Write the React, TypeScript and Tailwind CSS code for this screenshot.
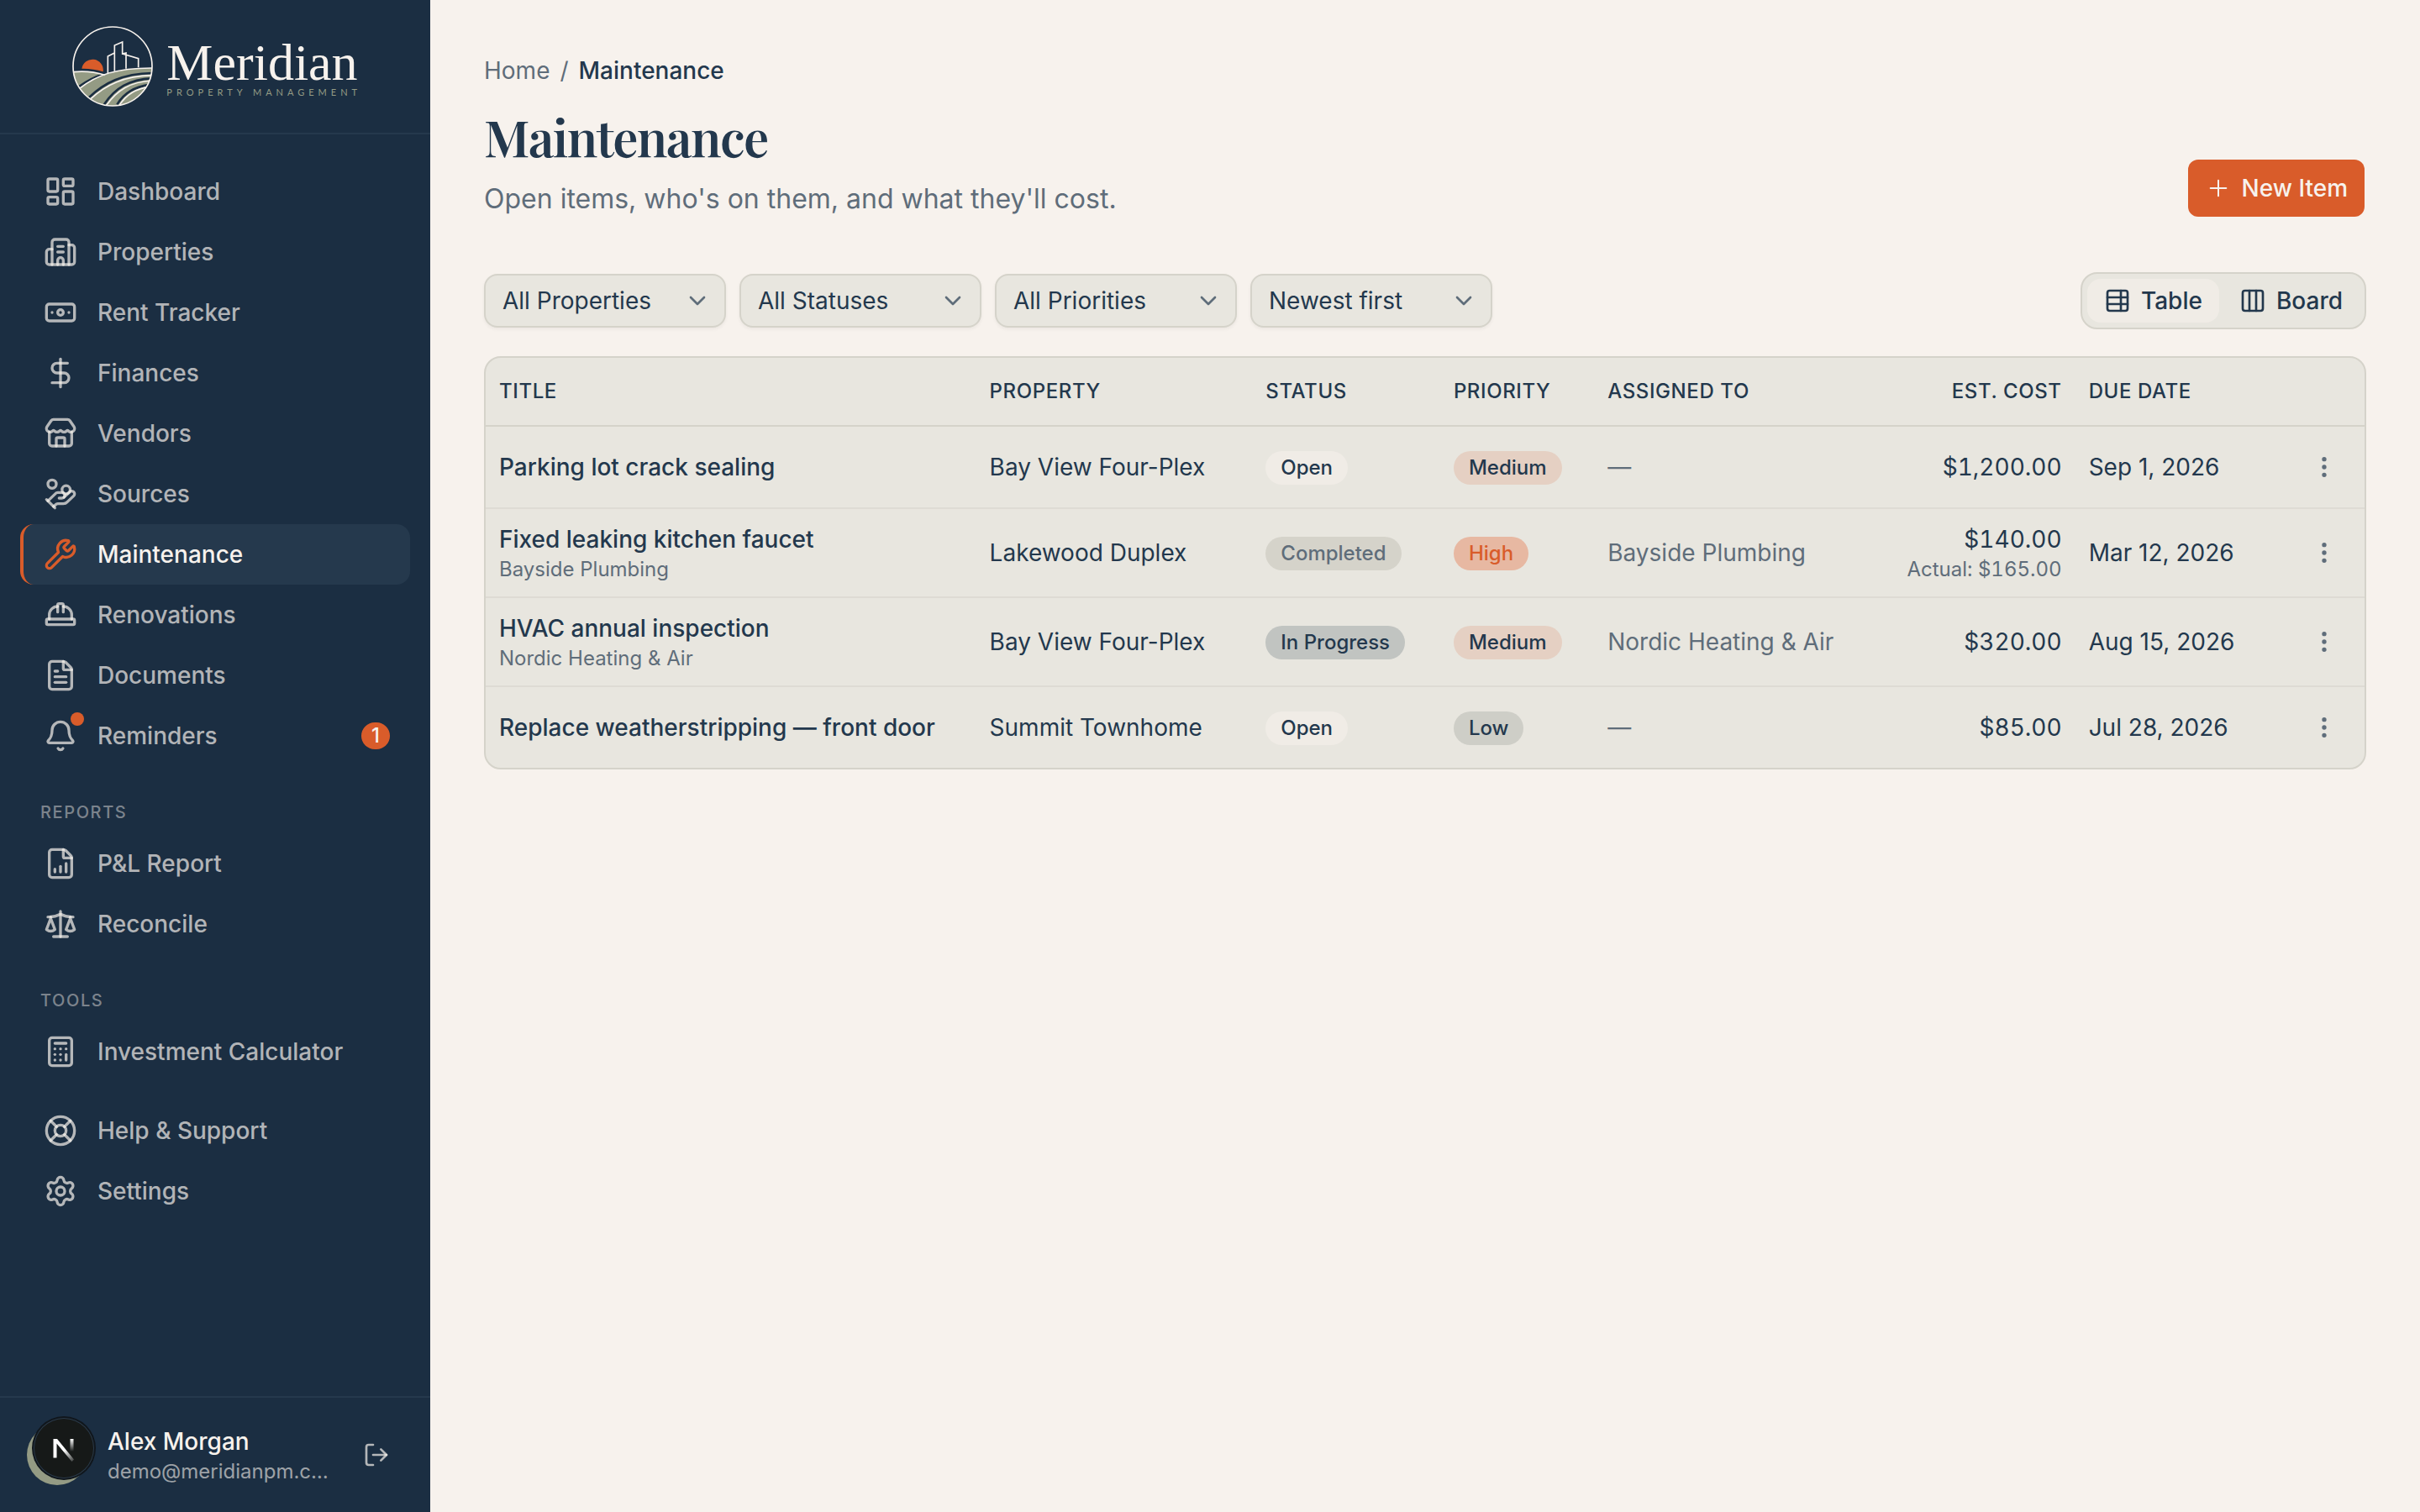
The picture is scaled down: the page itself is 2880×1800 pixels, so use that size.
import { useState, type ReactNode } from 'react';
import {
  Banknote,
  Bell,
  Building2,
  Calculator,
  ChevronDown,
  Columns3,
  DollarSign,
  EllipsisVertical,
  FileChartColumnIncreasing,
  FileText,
  HandCoins,
  HardHat,
  LayoutDashboard,
  LifeBuoy,
  LogOut,
  Plus,
  Scale,
  Settings,
  Store,
  TableProperties,
  Wrench,
  type LucideIcon,
} from 'lucide-react';

type NavEntry = { label: string; icon: LucideIcon; badge?: number };

const mainNav: NavEntry[] = [
  { label: 'Dashboard', icon: LayoutDashboard },
  { label: 'Properties', icon: Building2 },
  { label: 'Rent Tracker', icon: Banknote },
  { label: 'Finances', icon: DollarSign },
  { label: 'Vendors', icon: Store },
  { label: 'Sources', icon: HandCoins },
  { label: 'Maintenance', icon: Wrench },
  { label: 'Renovations', icon: HardHat },
  { label: 'Documents', icon: FileText },
  { label: 'Reminders', icon: Bell, badge: 1 },
];

const reportsNav: NavEntry[] = [
  { label: 'P&L Report', icon: FileChartColumnIncreasing },
  { label: 'Reconcile', icon: Scale },
];

const toolsNav: NavEntry[] = [{ label: 'Investment Calculator', icon: Calculator }];

const supportNav: NavEntry[] = [
  { label: 'Help & Support', icon: LifeBuoy },
  { label: 'Settings', icon: Settings },
];

const filters = [
  { label: 'Property', options: ['All Properties', 'Bay View Four-Plex', 'Lakewood Duplex', 'Summit Townhome'] },
  { label: 'Status', options: ['All Statuses', 'Open', 'In Progress', 'Completed'] },
  { label: 'Priority', options: ['All Priorities', 'High', 'Medium', 'Low'] },
  { label: 'Sort', options: ['Newest first', 'Oldest first'] },
];

const badgeStyles: Record<string, string> = {
  Open: 'bg-[#f0ece6] text-[#23384d]',
  Completed: 'bg-[#d5d3ca] text-[#5f6d7a]',
  'In Progress': 'bg-[#c1c4c1] text-[#23384d]',
  High: 'bg-[#e7b8a2] text-[#d95c2a]',
  Medium: 'bg-[#e5d0c3] text-[#23384d]',
  Low: 'bg-[#cecec7] text-[#23384d]',
};

const items = [
  { title: 'Parking lot crack sealing', property: 'Bay View Four-Plex', status: 'Open', priority: 'Medium', cost: '$1,200.00', due: 'Sep 1, 2026' },
  { title: 'Fixed leaking kitchen faucet', vendor: 'Bayside Plumbing', property: 'Lakewood Duplex', status: 'Completed', priority: 'High', cost: '$140.00', actual: '$165.00', due: 'Mar 12, 2026' },
  { title: 'HVAC annual inspection', vendor: 'Nordic Heating & Air', property: 'Bay View Four-Plex', status: 'In Progress', priority: 'Medium', cost: '$320.00', due: 'Aug 15, 2026' },
  { title: 'Replace weatherstripping — front door', property: 'Summit Townhome', status: 'Open', priority: 'Low', cost: '$85.00', due: 'Jul 28, 2026' },
];

function Logo() {
  return (
    <div className="flex items-center gap-4">
      <svg viewBox="78 65 288 288" className="size-24" fill="none" aria-hidden="true">
        <clipPath id="disc">
          <circle cx="222" cy="209" r="141" />
        </clipPath>
        <path d="M112 217a38 38 0 0 1 76 11q-36-12-76-11Z" fill="#d95c2a" />
        <g stroke="#f7f2ed" strokeWidth="5">
          <path d="M205 234v-61l24-12M229 226v-92l28-12v42l13-3v56M257 164l57 17v32" />
        </g>
        <g clipPath="url(#disc)">
          <path d="M80 229c40-4 80 0 114 11 45-18 100-26 172-25v140H80Z" fill="#949b84" />
          <g stroke="#1b2e42" strokeWidth="8">
            <path d="M100 283c30-22 55-36 92-46" />
            <path d="M138 320c54-52 118-85 226-87" />
            <path d="M192 345c38-58 90-90 172-93" />
            <path d="M238 345c26-42 60-62 120-72" />
          </g>
          <g stroke="#f7f2ed" strokeWidth="5">
            <path d="M80 229c40-4 80 0 114 11" />
            <path d="M104 288c62-48 130-74 262-73" />
            <path d="M144 325c54-50 118-82 222-84" />
            <path d="M200 348c38-54 84-84 164-88" />
            <path d="M246 348c26-40 58-58 112-68" />
          </g>
        </g>
        <circle cx="222" cy="209" r="141" stroke="#f7f2ed" strokeWidth="5" />
      </svg>
      <div className="flex flex-col pt-1.5">
        <span className="font-['Liberation_Serif',serif] text-[62px] leading-14 text-[#f7f2ed]">Meridian</span>
        <span className="-mr-[5px] font-[Lato,sans-serif] text-[11px] leading-4 tracking-[5px] whitespace-nowrap text-[#949b84]">PROPERTY MANAGEMENT</span>
      </div>
    </div>
  );
}

function NavItem({ label, icon: Icon, badge }: NavEntry) {
  const active = label === 'Maintenance';
  return (
    <li>
      <a
        href="#"
        aria-current={active ? 'page' : undefined}
        className={`flex h-18 items-center gap-6 rounded-2xl border-l-4 px-6 font-medium ${active ? 'border-[#d95c2a] bg-[#25394d] text-[#f7f2ed]' : 'border-transparent text-[#f7f2ed]/70'}`}
      >
        <span className="relative">
          <Icon className={`size-10 ${active ? 'text-[#d95c2a]' : ''}`} />
          {badge && <span className="absolute -top-2 -right-2 size-4 rounded-full bg-[#d95c2a]" />}
        </span>
        {label}
        {badge && (
          <span className="ml-auto flex h-8 min-w-[34px] items-center justify-center rounded-full bg-[#d95c2a] text-2xl text-[#f7f2ed]">{badge}</span>
        )}
      </a>
    </li>
  );
}

function NavGroup({ title, entries }: { title?: string; entries: NavEntry[] }) {
  return (
    <div>
      {title && (
        <h2 className="px-6 pt-10 pb-2.5 text-xl leading-[30px] font-medium tracking-[0.08em] text-[#f7f2ed]/45 uppercase">{title}</h2>
      )}
      <ul>
        {entries.map((entry) => (
          <NavItem key={entry.label} {...entry} />
        ))}
      </ul>
    </div>
  );
}

function DevBadge() {
  return (
    <div className="absolute bottom-10 left-10 flex size-18 items-center justify-center rounded-full bg-[#161918] shadow-[0_0_0_2px_#10161c,inset_0_0_0_1px_#2a3a4a]">
      <svg viewBox="0 0 26 32" className="h-8 w-[26px]" aria-hidden="true">
        <defs>
          <linearGradient id="slash" x1="14" y1="18" x2="24" y2="31" gradientUnits="userSpaceOnUse">
            <stop stopColor="#fff" />
            <stop offset="1" stopColor="#fff" stopOpacity="0.2" />
          </linearGradient>
          <linearGradient id="stem" x1="22" y1="5" x2="22" y2="20" gradientUnits="userSpaceOnUse">
            <stop stopColor="#fff" />
            <stop offset="1" stopColor="#fff" stopOpacity="0" />
          </linearGradient>
        </defs>
        <path d="M.5 27.500V5H5l20 24.500L22.500 32 4.500 10.500v17Z" fill="url(#slash)" />
        <path d="M20.500 5h4v15h-4z" fill="url(#stem)" />
      </svg>
    </div>
  );
}

function Sidebar() {
  return (
    <aside className="relative flex w-[512px] shrink-0 flex-col bg-[#1b2e42]">
      <div className="flex h-40 items-center justify-center border-b-2 border-[#25394d]">
        <Logo />
      </div>
      <nav className="flex-1 px-6 py-8">
        <NavGroup entries={mainNav} />
        <NavGroup title="Reports" entries={reportsNav} />
        <NavGroup title="Tools" entries={toolsNav} />
        <div className="mt-[22px]">
          <NavGroup entries={supportNav} />
        </div>
      </nav>
      <div className="flex items-center gap-6 border-t-2 border-[#25394d] p-8">
        <div className="size-18 shrink-0 rounded-full bg-[#949b84]" />
        <div className="flex-1 whitespace-nowrap">
          <p className="font-medium text-[#f7f2ed]">Alex Morgan</p>
          <p className="text-2xl leading-8 text-[#f7f2ed]/60">demo@meridianpm.c…</p>
        </div>
        <button type="button" aria-label="Log out" className="-ml-6 p-4 text-[#f7f2ed]/70">
          <LogOut className="size-8" />
        </button>
      </div>
      <DevBadge />
    </aside>
  );
}

function Badge({ children }: { children: string }) {
  return (
    <span className={`inline-block rounded-full px-[18px] py-1 align-middle text-2xl leading-8 font-medium ${badgeStyles[children]}`}>
      {children}
    </span>
  );
}

function HeadCell({ children, className = '' }: { children: ReactNode; className?: string }) {
  return (
    <th scope="col" className={`h-[81px] px-4 text-left text-2xl font-medium tracking-wide uppercase ${className}`}>
      {children}
    </th>
  );
}

function ItemsTable() {
  return (
    <div className="overflow-hidden rounded-[20px] border-2 border-[#d5d3ca] bg-[#e8e6df]">
      <table className="w-full whitespace-nowrap">
        <thead>
          <tr className="border-b-2 border-[#d5d3ca]">
            <HeadCell className="w-[26.1%]">Title</HeadCell>
            <HeadCell className="w-[14.7%]">Property</HeadCell>
            <HeadCell className="w-[10%]">Status</HeadCell>
            <HeadCell className="w-[8.2%]">Priority</HeadCell>
            <HeadCell className="w-[15%]">Assigned to</HeadCell>
            <HeadCell className="w-[10.6%] text-right">Est. Cost</HeadCell>
            <HeadCell className="w-[11%]">Due Date</HeadCell>
            <th scope="col" aria-label="Actions" />
          </tr>
        </thead>
        <tbody>
          {items.map((item) => (
            <tr key={item.title} className="border-b-2 border-[#dedbd4] last:border-b-0">
              <td className="p-4">
                <p className="font-medium">{item.title}</p>
                {item.vendor && <p className="text-2xl leading-8 text-[#5f6d7a]">{item.vendor}</p>}
              </td>
              <td className="p-4">{item.property}</td>
              <td className="p-4"><Badge>{item.status}</Badge></td>
              <td className="p-4"><Badge>{item.priority}</Badge></td>
              <td className="p-4 text-[#5f6d7a]">{item.vendor ?? '—'}</td>
              <td className="p-4 text-right tabular-nums">
                <p>{item.cost}</p>
                {item.actual && <p className="text-2xl leading-8 text-[#5f6d7a]">Actual: {item.actual}</p>}
              </td>
              <td className="p-4">{item.due}</td>
              <td className="p-4">
                <button type="button" aria-label={`Actions for ${item.title}`} className="ml-auto block p-4 text-[#5f6d7a]">
                  <EllipsisVertical className="size-8" />
                </button>
              </td>
            </tr>
          ))}
        </tbody>
      </table>
    </div>
  );
}

export default function App() {
  const [view, setView] = useState('Table');

  return (
    <div className="flex min-h-screen bg-[#f7f2ed] font-[Inter,sans-serif] text-[28px] leading-10 text-[#23384d]">
      <Sidebar />
      <main className="min-w-0 flex-1 p-16">
        <nav aria-label="Breadcrumb" className="flex gap-3 text-[#5f6d7a]">
          <a href="#">Home</a>
          <span>/</span>
          <span className="font-medium text-[#23384d]">Maintenance</span>
        </nav>

        <header className="mt-5 flex items-end justify-between">
          <div>
            <h1 className="font-['Playfair_Display','Liberation_Serif',serif] text-[60px] leading-[76px] font-semibold tracking-tight">Maintenance</h1>
            <p className="mt-3 text-[32px] leading-[50px] text-[#5f6d7a]">Open items, who's on them, and what they'll cost.</p>
          </div>
          <button type="button" className="mr-0.5 mb-1 flex h-[68px] items-center gap-3 rounded-xl bg-[#d95c2a] px-5 font-medium text-[#f7f2ed]">
            <Plus className="size-8" strokeWidth={1.5} />
            New Item
          </button>
        </header>

        <div className="mt-[62px] flex items-center justify-between">
          <div className="flex gap-4">
            {filters.map((filter) => (
              <div key={filter.label} className="relative">
                <select
                  aria-label={filter.label}
                  className="h-16 w-72 appearance-none rounded-2xl border-2 border-[#d5d3ca] bg-[#e8e6df] px-5 shadow-[0_2px_4px_rgba(0,0,0,0.05)]"
                >
                  {filter.options.map((option) => (
                    <option key={option}>{option}</option>
                  ))}
                </select>
                <ChevronDown className="pointer-events-none absolute top-4 right-[18px] size-8 text-[#5f6d7a]" />
              </div>
            ))}
          </div>
          <div className="flex gap-1 rounded-[20px] border-2 border-[#d5d3ca] bg-[#e8e6df] p-1.5">
            {[
              { name: 'Table', icon: TableProperties },
              { name: 'Board', icon: Columns3 },
            ].map(({ name, icon: Icon }) => (
              <button
                key={name}
                type="button"
                aria-pressed={view === name}
                onClick={() => setView(name)}
                className={`flex h-13 items-center gap-3 rounded-2xl px-5 font-medium ${view === name ? 'bg-[#f0ece6]' : ''}`}
              >
                <Icon className="size-8" />
                {name}
              </button>
            ))}
          </div>
        </div>

        <div className="mt-8">
          <ItemsTable />
        </div>
      </main>
    </div>
  );
}
